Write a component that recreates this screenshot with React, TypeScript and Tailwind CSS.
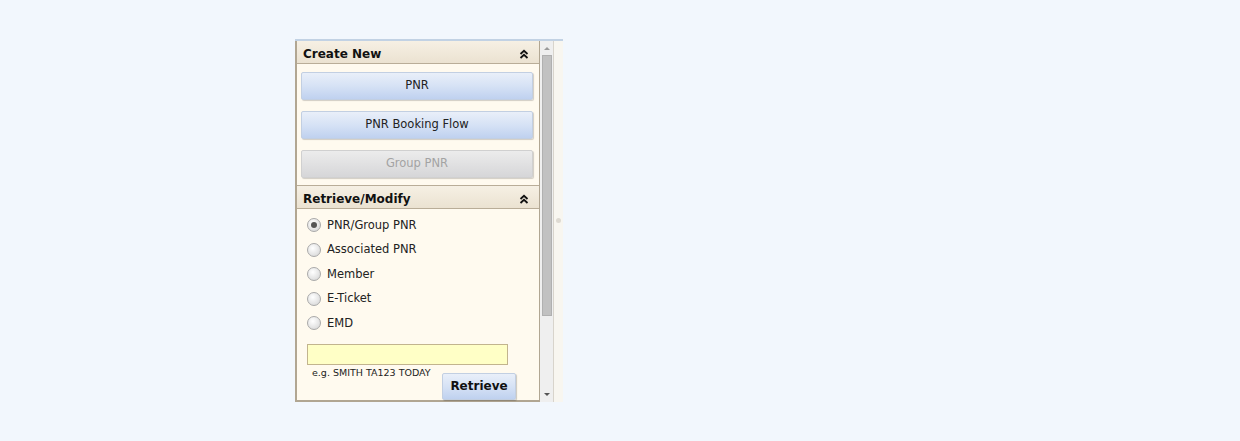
import React from "react";

const font = { fontFamily: '"DejaVu Sans", Verdana, sans-serif' };

function Chevrons() {
  return (
    <svg width="10" height="10" viewBox="0 0 10 10" className="block">
      <path d="M1.5 5 L5 1.8 L8.5 5" fill="none" stroke="#111" strokeWidth="1.8" />
      <path d="M1.5 9 L5 5.8 L8.5 9" fill="none" stroke="#111" strokeWidth="1.8" />
    </svg>
  );
}

function Header({ title }: { title: string }) {
  return (
    <div className="flex h-[23px] items-end justify-between border-b border-[#b9ad98] bg-gradient-to-b from-[#f6f0e4] to-[#ebe2d1] pb-[2px] pl-[6px] pr-[10px]">
      <span className="text-[12px] font-bold leading-[14px] text-[#111]">{title}</span>
      <div className="mb-[2px]">
        <Chevrons />
      </div>
    </div>
  );
}

function Btn({ label, disabled }: { label: string; disabled?: boolean }) {
  return (
    <div
      className={
        "flex h-[28px] items-center justify-center rounded-[2px] border text-[11.5px] shadow-[1px_1px_1px_rgba(0,0,0,0.18)] " +
        (disabled
          ? "border-[#d0d0d0] bg-gradient-to-b from-[#ececec] to-[#d6d6d8] text-[#a3a3a3]"
          : "border-[#c2cfe2] bg-gradient-to-b from-[#e9eff9] via-[#d6e2f5] to-[#bfd1ef] text-[#222]")
      }
    >
      {label}
    </div>
  );
}

function Radio({ label, checked }: { label: string; checked?: boolean }) {
  return (
    <div className="flex h-[24.5px] items-center">
      <div className="ml-[10px] flex h-[14px] w-[14px] items-center justify-center rounded-full border border-[#a9a9a9] bg-[radial-gradient(circle_at_40%_35%,#ffffff,#d2d2d2)]">
        {checked && <div className="h-[6px] w-[6px] rounded-full bg-[#555]" />}
      </div>
      <span className="ml-[6px] text-[11.5px] text-[#222]">{label}</span>
    </div>
  );
}

export default function App() {
  return (
    <div className="min-h-[441px] w-full bg-[#f2f7fd] pl-[295px] pt-[39px]" style={font}>
      <div className="w-[268px]">
        <div className="h-[2px] bg-[#c2d2e4]" />
        <div className="flex">
          <div className="w-[245px] border-b-2 border-l-2 border-r border-[#b1a692] bg-[#fffaef]">
            <Header title="Create New" />
            <div className="flex flex-col gap-[11px] pb-[7px] pl-[4px] pr-[6px] pt-[8px]">
              <Btn label="PNR" />
              <Btn label="PNR Booking Flow" />
              <Btn label="Group PNR" disabled />
            </div>
            <div className="border-t border-[#b9ad98]">
              <Header title="Retrieve/Modify" />
            </div>
            <div className="pt-[4px]">
              <Radio label="PNR/Group PNR" checked />
              <Radio label="Associated PNR" />
              <Radio label="Member" />
              <Radio label="E-Ticket" />
              <Radio label="EMD" />
              <div className="ml-[10px] mt-[8px] h-[21px] w-[201px] border border-[#c2b48e] bg-[#ffffc6]" />
              <div className="flex items-start">
                <span className="ml-[15px] mt-[1px] text-[9.5px] text-[#222]">e.g. SMITH TA123 TODAY</span>
                <div className="ml-auto mr-[23px] mt-[8px] flex h-[27px] w-[74px] items-center justify-center rounded-[2px] border border-[#c2cfe2] bg-gradient-to-b from-[#e9eff9] via-[#d6e2f5] to-[#bfd1ef] text-[12px] font-bold text-[#111] shadow-[1px_1px_1px_rgba(0,0,0,0.2)]">
                  Retrieve
                </div>
              </div>
            </div>
          </div>
          <div className="flex w-[14px] flex-col items-center border-r border-[#d8d4cc] bg-[#efefef]">
            <div className="flex h-[14px] items-center justify-center">
              <div className="h-0 w-0 border-x-[3px] border-b-[3px] border-x-transparent border-b-[#9a9a9a]" />
            </div>
            <div className="h-[261px] w-[10px] border border-[#b0b0b0] bg-[#c1c1c1]" />
            <div className="flex-1" />
            <div className="flex h-[14px] items-center justify-center">
              <div className="h-0 w-0 border-x-[3px] border-t-[3px] border-x-transparent border-t-[#555]" />
            </div>
          </div>
          <div className="flex w-[9px] flex-col items-center bg-[#f8f6f0]">
            <div className="mt-[177px] h-[5px] w-[5px] rounded-full bg-[#dedad2]" />
          </div>
        </div>
      </div>
    </div>
  );
}
